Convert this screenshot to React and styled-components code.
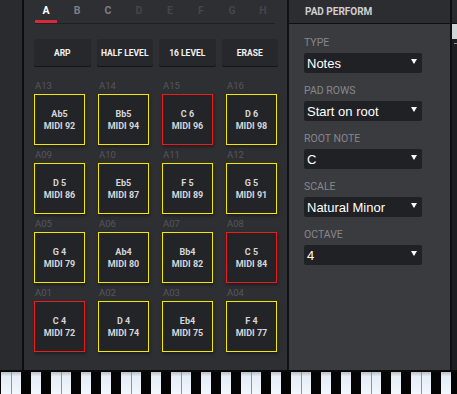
import React from "react";
import styled, { createGlobalStyle } from "styled-components";

const Global = createGlobalStyle`
  html, body { margin: 0; padding: 0; background: #2e2f33; }
  body { font-family: Roboto, "Liberation Sans", sans-serif; overflow: hidden; }
  * { box-sizing: border-box; }
`;

const Screen = styled.div`
  width: 457px;
  height: 394px;
  display: flex;
  flex-direction: column;
  background: #000;
`;

const Top = styled.div`
  height: 370px;
  display: flex;
  border-bottom: 2px solid #0a0a0b;
  height: 372px;
`;

const LeftStrip = styled.div`
  width: 24px;
  background: #2a2b2f;
  border-right: 2px solid #0c0c0d;
`;

const Main = styled.div`
  width: 265px;
  background: #2e2f33;
  border-right: 2px solid #111214;
  display: flex;
  flex-direction: column;
  padding-left: 10px;
`;

const TabBar = styled.div`
  margin-left: 1px;
  width: 240px;
  display: flex;
  gap: 9px;
  border-bottom: 1px solid #1f2023;
`;

const Tab = styled.div`
  width: 22px;
  height: 23px;
  padding-top: 5px;
  text-align: center;
  font-size: 10.5px;
  font-weight: 700;
  line-height: 12px;
  color: ${(p) => (p.$active ? "#ffffff" : p.$dim ? "#45464b" : "#7d7e83")};
  border-bottom: 3px solid ${(p) => (p.$active ? "#d42a3c" : "transparent")};
`;

const ButtonRow = styled.div`
  margin-top: 15px;
  width: 244px;
  display: grid;
  grid-template-columns: repeat(4, 1fr);
  gap: 6px;
`;

const ActionButton = styled.div`
  height: 27px;
  background: #27282c;
  border-radius: 2px;
  box-shadow: 0 1px 0 #141517;
  display: flex;
  align-items: center;
  justify-content: center;
  color: #f2f2f2;
  font-size: 8.5px;
  font-weight: 700;
`;

const PadGrid = styled.div`
  margin-top: 14px;
  display: grid;
  grid-template-columns: repeat(4, 51px);
  column-gap: 13px;
  row-gap: 4px;
`;

const PadCell = styled.div`
  display: flex;
  flex-direction: column;
`;

const PadLabel = styled.div`
  height: 12px;
  line-height: 12px;
  margin-bottom: 2px;
  font-size: 9.5px;
  color: #55565b;
  padding-left: 1px;
`;

const Pad = styled.div`
  width: 51px;
  height: 51px;
  background: #232428;
  border: 1px solid ${(p) => (p.$root ? "#ec1c1c" : "#f3e800")};
  box-shadow: 1px 2px 3px rgba(0, 0, 0, 0.35);
  display: flex;
  flex-direction: column;
  align-items: center;
  justify-content: center;
  gap: 2px;
  color: #d6d6d8;
  font-size: 9px;
  font-weight: 700;
  line-height: 10px;
`;

const Right = styled.div`
  width: 163px;
  background: #3a3b3f;
  border-right: 2px solid #0e0f10;
  display: flex;
  flex-direction: column;
`;

const Header = styled.div`
  height: 24px;
  background: #2c2d31;
  border-bottom: 1px solid #0f1012;
  padding-left: 16px;
  line-height: 23px;
  font-size: 10px;
  font-weight: 700;
  color: #cfcfd2;
`;

const Form = styled.div`
  padding: 13px 0 0 15px;
  display: flex;
  flex-direction: column;
  gap: 12px;
`;

const Field = styled.div`
  display: flex;
  flex-direction: column;
`;

const FieldLabel = styled.div`
  height: 12px;
  line-height: 12px;
  margin-bottom: 4px;
  font-size: 10.5px;
  color: #86878c;
`;

const Select = styled.div`
  width: 118px;
  height: 20px;
  background: #202125;
  border-radius: 2px;
  display: flex;
  align-items: center;
  justify-content: space-between;
  padding: 0 5px 0 3px;
  font-family: "Liberation Sans", Arial, sans-serif;
  font-size: 13px;
  color: #ffffff;
`;

const Caret = styled.span`
  width: 0;
  height: 0;
  border-left: 3.5px solid transparent;
  border-right: 3.5px solid transparent;
  border-top: 5px solid #ffffff;
  margin-top: -3px;
`;

const Scroll = styled.div`
  width: 5px;
  background: #1d1e21;
  display: flex;
  flex-direction: column;
`;

const ScrollTop = styled.div`
  height: 24px;
  background: #2a2b2f;
  border-bottom: 1px solid #0f1012;
`;

const ScrollThumb = styled.div`
  height: 15px;
  background: #cfd6da;
`;

const ScrollTick = styled.div`
  margin: 4px 0 0 2px;
  width: 3px;
  height: 1px;
  background: #8d9296;
`;

const KeyboardWrap = styled.div`
  height: 22px;
  background: #eef4fb;
`;

const tabs = ["A", "B", "C", "D", "E", "F", "G", "H"];
const buttons = ["ARP", "HALF LEVEL", "16 LEVEL", "ERASE"];
const pads = [
  ["A13", "Ab5", 92, false], ["A14", "Bb5", 94, false], ["A15", "C 6", 96, true], ["A16", "D 6", 98, false],
  ["A09", "D 5", 86, false], ["A10", "Eb5", 87, false], ["A11", "F 5", 89, false], ["A12", "G 5", 91, false],
  ["A05", "G 4", 79, false], ["A06", "Ab4", 80, false], ["A07", "Bb4", 82, false], ["A08", "C 5", 84, true],
  ["A01", "C 4", 72, true], ["A02", "D 4", 74, false], ["A03", "Eb4", 75, false], ["A04", "F 4", 77, false],
];
const fields = [
  ["TYPE", "Notes"],
  ["PAD ROWS", "Start on root"],
  ["ROOT NOTE", "C"],
  ["SCALE", "Natural Minor"],
  ["OCTAVE", "4"],
];

function Keyboard() {
  const blacks = [10, 30, 60, 80, 100];
  const items = [];
  for (let c = -109; c < 457; c += 120) {
    items.push(<rect key={`c${c}`} x={c} y={0} width={1} height={22} fill="#8f969c" />);
    items.push(<rect key={`f${c}`} x={c + 50} y={0} width={1} height={22} fill="#8f969c" />);
    blacks.forEach((o) => {
      items.push(<rect key={`b${c}-${o}`} x={c + o} y={0} width={10} height={22} fill="#040404" />);
    });
  }
  return (
    <svg width="457" height="22" viewBox="0 0 457 22">
      <defs>
        <linearGradient id="wk" x1="0" y1="0" x2="0" y2="1">
          <stop offset="0" stopColor="#b9c0c6" />
          <stop offset="0.2" stopColor="#e6edf4" />
          <stop offset="1" stopColor="#f2f7fd" />
        </linearGradient>
      </defs>
      <rect x="0" y="0" width="457" height="22" fill="url(#wk)" />
      {items}
    </svg>
  );
}

export default function App() {
  return (
    <>
      <Global />
      <Screen>
        <Top>
          <LeftStrip />
          <Main>
            <TabBar>
              {tabs.map((t, i) => (
                <Tab key={t} $active={i === 0} $dim={i > 2}>{t}</Tab>
              ))}
            </TabBar>
            <ButtonRow>
              {buttons.map((b) => (
                <ActionButton key={b}>{b}</ActionButton>
              ))}
            </ButtonRow>
            <PadGrid>
              {pads.map(([id, note, midi, root]) => (
                <PadCell key={id}>
                  <PadLabel>{id}</PadLabel>
                  <Pad $root={root}>
                    <span>{note}</span>
                    <span>MIDI {midi}</span>
                  </Pad>
                </PadCell>
              ))}
            </PadGrid>
          </Main>
          <Right>
            <Header>PAD PERFORM</Header>
            <Form>
              {fields.map(([l, v]) => (
                <Field key={l}>
                  <FieldLabel>{l}</FieldLabel>
                  <Select>
                    <span>{v}</span>
                    <Caret />
                  </Select>
                </Field>
              ))}
            </Form>
          </Right>
          <Scroll>
            <ScrollTop />
            <ScrollThumb />
            <ScrollTick />
          </Scroll>
        </Top>
        <KeyboardWrap>
          <Keyboard />
        </KeyboardWrap>
      </Screen>
    </>
  );
}
